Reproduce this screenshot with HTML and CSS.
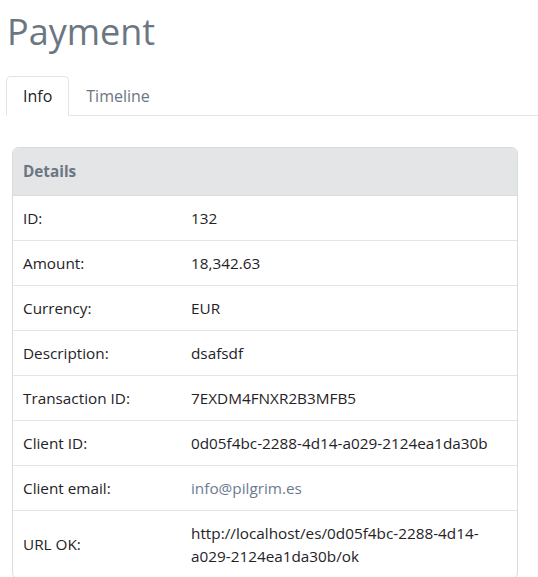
FILE: index.html
```html
<!DOCTYPE html>
<html lang="en">
<head>
<meta charset="utf-8">
<title>Payment</title>
<link rel="stylesheet" href="styles.css">
</head>
<body>
<div class="page">
  <h1 class="title">Payment</h1>
  <ul class="tabs">
    <li class="tab active">Info</li>
    <li class="tab">Timeline</li>
  </ul>
  <div class="card">
    <div class="card-header">Details</div>
    <table class="details">
      <tr><td class="label">ID:</td><td class="value">132</td></tr>
      <tr><td class="label">Amount:</td><td class="value">18,342.63</td></tr>
      <tr><td class="label">Currency:</td><td class="value">EUR</td></tr>
      <tr><td class="label">Description:</td><td class="value">dsafsdf</td></tr>
      <tr><td class="label">Transaction ID:</td><td class="value">7EXDM4FNXR2B3MFB5</td></tr>
      <tr><td class="label">Client ID:</td><td class="value">0d05f4bc-2288-4d14-a029-2124ea1da30b</td></tr>
      <tr><td class="label">Client email:</td><td class="value"><a class="link" href="#">info@pilgrim.es</a></td></tr>
      <tr><td class="label">URL OK:</td><td class="value">http://localhost/es/0d05f4bc-2288-4d14-a029-2124ea1da30b/ok</td></tr>
    </table>
  </div>
</div>
</body>
</html>
```

FILE: styles.css
```css
html, body {
  margin: 0;
  padding: 0;
  background: #ffffff;
}

body {
  font-family: "Open Sans", "Liberation Sans", sans-serif;
  color: #1f2326;
  font-size: 15.3px;
}

.page {
  padding: 0 0 0 6px;
}

.title {
  margin: 10px 0 0 0;
  font-size: 36px;
  line-height: 43px;
  font-weight: 400;
  color: #6b7683;
  padding-left: 1px;
}

.tabs {
  list-style: none;
  margin: 23px 0 0 0;
  padding: 0;
  display: flex;
  border-bottom: 1px solid #e1e4e8;
}

.tab {
  font-size: 16px;
  line-height: 24px;
  padding: 7px 16px 7px 16px;
  border: 1px solid transparent;
  border-radius: 5px 5px 0 0;
  margin-bottom: -1px;
  color: #6b7683;
}

.tab.active {
  color: #1f2326;
  background: #ffffff;
  border-color: #e1e4e8 #e1e4e8 #ffffff;
}

.card {
  margin: 31px 20px 0 6px;
  border: 1px solid #d9dcdf;
  border-radius: 6px;
  overflow: hidden;
}

.card-header {
  background: #e4e5e7;
  padding: 12px 10px;
  line-height: 23px;
  font-weight: 700;
  color: #6b7683;
  border-bottom: 1px solid #d9dcdf;
}

.details {
  width: 100%;
  border-collapse: collapse;
}

.details td {
  padding: 10.5px 10px;
  line-height: 23px;
  vertical-align: middle;
}

.details tr + tr td {
  border-top: 1px solid #e1e4e8;
}

.label {
  width: 148px;
}

.link {
  color: #6b7a8f;
  text-decoration: none;
}
```
